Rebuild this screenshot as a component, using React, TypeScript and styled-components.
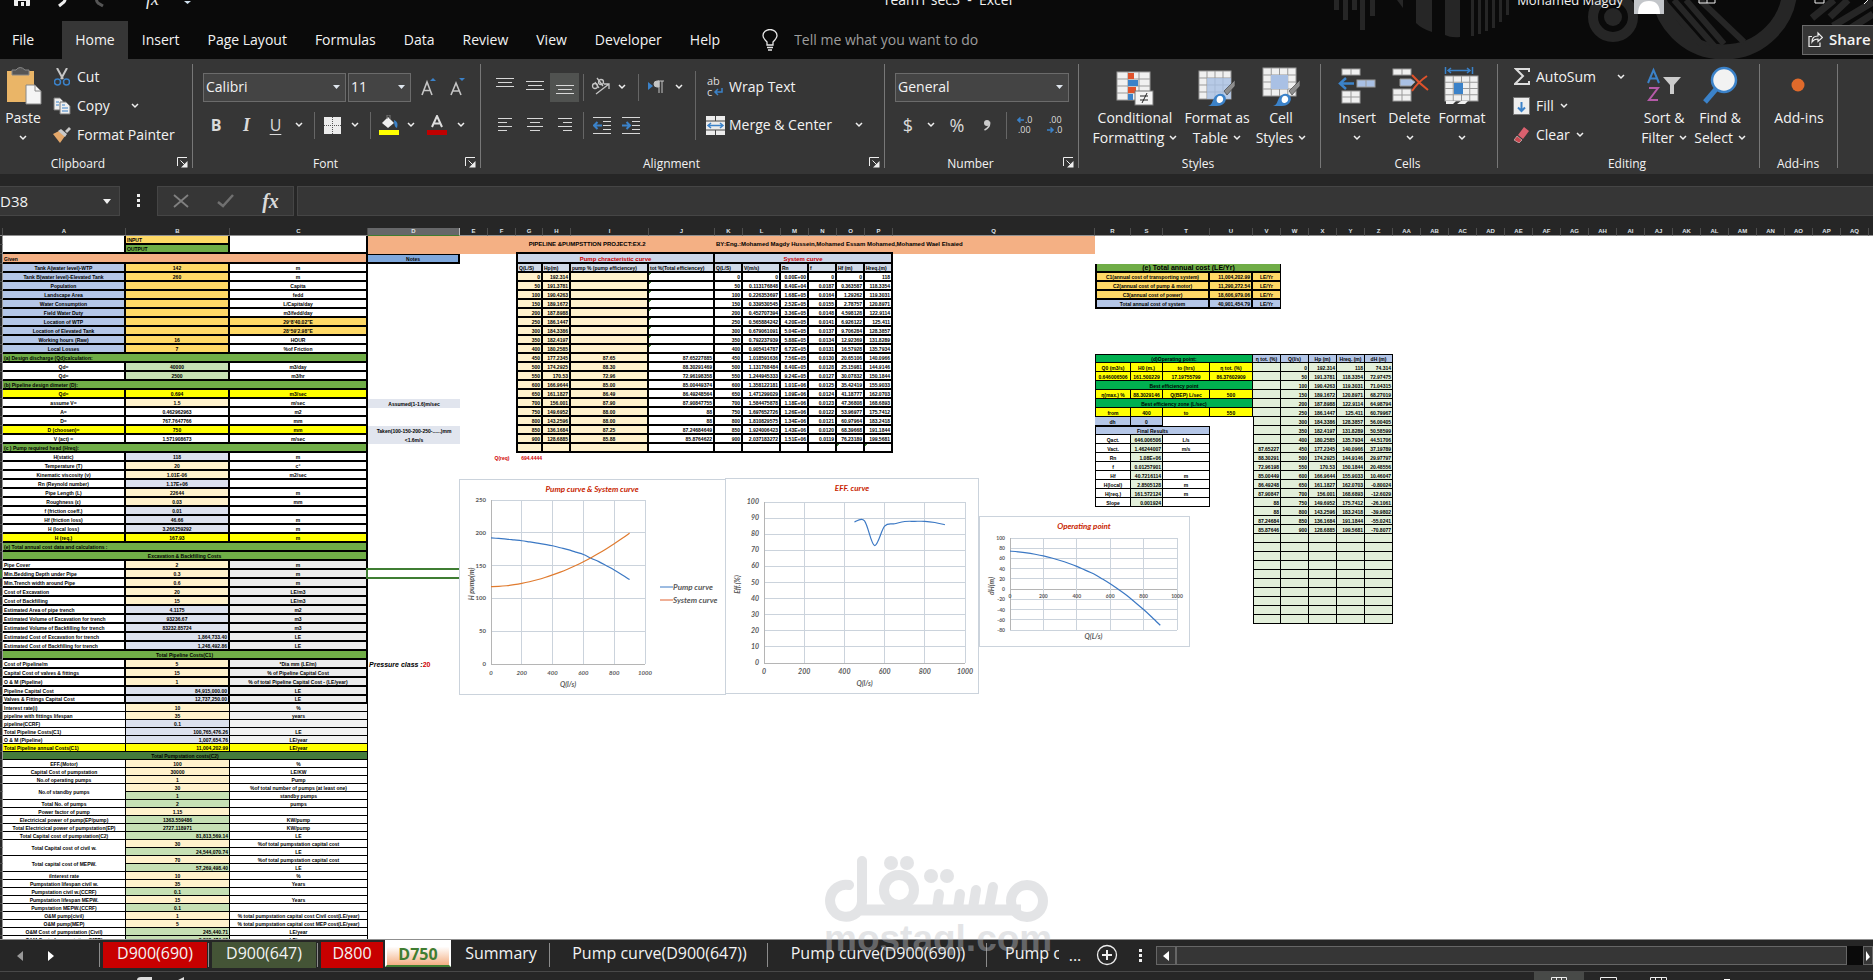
import React from 'react';
import styled, { createGlobalStyle, css } from 'styled-components';

const Global = createGlobalStyle`
  *, *::before, *::after { box-sizing: border-box; }
  body { margin: 0; background: #262626; overflow: hidden; }
  button, input, select { font: inherit; color: inherit; }
`;

const ui = `"Open Sans", "Noto Sans", sans-serif`;

const Window = styled.div`
  position: relative;
  height: 100vh;
  display: flex;
  flex-direction: column;
  overflow: hidden;
  font-family: ${ui};
  font-size: 14px;
  line-height: 20px;
  color: #f3f3f3;
`;

/* ---------- title bar and tabs ---------- */

const Top = styled.header`
  position: relative;
  background: #0a0a0a;
  flex: none;
`;
const Decor = styled.svg`
  position: absolute;
  right: 0;
  top: 0;
`;
const TitleBar = styled.div`
  position: relative;
  height: 21px;
  display: grid;
  grid-template-columns: 1fr auto 1fr;
  column-gap: 8px;
`;
const TitleItems = styled.div<{ $end?: boolean; $mid?: boolean }>`
  height: 32px;
  margin-top: -16px;
  padding-left: ${(p) => (p.$mid ? 22 : 0)}px;
  display: flex;
  align-items: center;
  white-space: nowrap;
  font-size: ${(p) => (p.$end ? 13 : 14)}px;
  justify-content: ${(p) => (p.$end ? 'flex-end' : 'flex-start')};
`;
const TabRow = styled.nav`
  position: relative;
  display: flex;
  height: 38px;
`;
const Tab = styled.button<{ $on?: boolean; $first?: boolean }>`
  border: 0;
  padding: 0 ${(p) => (p.$on ? 13 : 14)}px;
  margin-left: ${(p) => (p.$first ? '-2px' : 0)};
  margin-right: ${(p) => (p.$first ? '14px' : 0)};
  background: ${(p) => (p.$on ? '#363636' : 'transparent')};
  white-space: nowrap;
`;
const Tell = styled.label`
  display: flex;
  align-items: center;
  gap: 16px;
  padding: 0 0 0 28px;
  input {
    width: 240px;
    border: 0;
    padding: 0;
    background: transparent;
    outline: 0;
  }
  input::placeholder { color: #9d9d9d; opacity: 1; }
`;
const Share = styled.button`
  display: flex;
  align-items: center;
  gap: 6px;
  width: 76px;
  height: 30px;
  margin: 4px -5px 0 auto;
  padding: 0 0 2px 5px;
  background: #363636;
  border: 1px solid #6a6a6a;
  font-weight: 600;
  font-size: 15px;
  white-space: nowrap;
`;

/* ---------- ribbon ---------- */

const Ribbon = styled.section`
  display: flex;
  flex: none;
  height: 115px;
  background: #363636;
  overflow: hidden;
`;
const Group = styled.div<{ $w: number }>`
  position: relative;
  flex: none;
  width: ${(p) => p.$w}px;
  display: flex;
  flex-direction: column;
  justify-content: space-between;
  &::after {
    content: '';
    position: absolute;
    right: 0;
    top: 5px;
    bottom: 6px;
    width: 1px;
    background: #777;
  }
`;
const GroupBody = styled.div<{ $pad?: number }>`
  display: flex;
  padding-left: ${(p) => p.$pad ?? 0}px;
`;
const GroupLabel = styled.div<{ $pr?: number }>`
  height: 21px;
  display: flex;
  align-items: center;
  font-size: 12px;
  span { flex: 1; text-align: center; padding-right: ${(p) => p.$pr ?? 0}px; }
`;
const Launch = styled.button`
  width: 21px;
  height: 14px;
  padding: 0;
  border: 0;
  background: none;
  display: flex;
  justify-content: center;
`;
const TwoRows = styled.div`
  display: grid;
  grid-template-rows: 30px 30px;
  row-gap: 8px;
  padding-top: 13px;
`;
const ThreeRows = styled.div`
  display: grid;
  grid-template-rows: repeat(3, 29px);
  padding-top: 3px;
`;
const Row = styled.div<{ $pad?: number; $gap?: number }>`
  display: flex;
  align-items: center;
  gap: ${(p) => p.$gap ?? 0}px;
  padding-left: ${(p) => p.$pad ?? 0}px;
`;
const Btn = styled.button<{ $w: number; $on?: boolean }>`
  flex: none;
  width: ${(p) => p.$w}px;
  height: 29px;
  padding: 0;
  border: 0;
  background: ${(p) => (p.$on ? '#505250' : 'none')};
  display: flex;
  align-items: center;
  justify-content: center;
`;
const Glyph = styled.span<{ $size?: number; $serif?: boolean; $italic?: boolean; $u?: boolean; $bold?: boolean }>`
  font-size: ${(p) => p.$size ?? 16}px;
  font-family: ${(p) => (p.$serif ? '"Liberation Serif", serif' : ui)};
  font-style: ${(p) => (p.$italic ? 'italic' : 'normal')};
  font-weight: ${(p) => (p.$bold ? 700 : 400)};
  text-decoration: ${(p) => (p.$u ? 'underline' : 'none')};
  text-underline-offset: 3px;
  color: #dadada;
`;
const Sep = styled.i<{ $w: number; $tall?: boolean }>`
  flex: none;
  width: ${(p) => p.$w}px;
  height: ${(p) => (p.$tall ? 69 : 27)}px;
  margin-top: ${(p) => (p.$tall ? 12 : 0)}px;
  background: linear-gradient(#666, #666) center / 1px 100% no-repeat;
`;
const Pick = styled.div<{ $w: number }>`
  position: relative;
  width: ${(p) => p.$w}px;
  height: 29px;
  flex: none;
  select {
    appearance: none;
    width: 100%;
    height: 100%;
    padding: 0 2px;
    border: 1px solid #6b6b6b;
    border-radius: 0;
    background: #444;
    outline: 0;
  }
  svg { position: absolute; right: 6px; top: 12px; pointer-events: none; }
`;
const FontPicks = styled.div`
  display: flex;
  gap: 2px;
`;
const TextBtn = styled.button<{ $gap?: number; $pad?: number }>`
  display: flex;
  align-items: center;
  gap: ${(p) => p.$gap ?? 6}px;
  padding: 0 0 0 ${(p) => p.$pad ?? 0}px;
  border: 0;
  background: none;
  white-space: nowrap;
`;
const IconBox = styled.span<{ $w: number }>`
  width: ${(p) => p.$w}px;
  display: flex;
  justify-content: center;
`;
const Big = styled.button<{ $w: number }>`
  flex: none;
  width: ${(p) => p.$w}px;
  height: 90px;
  padding: 0;
  margin-top: 1px;
  border: 0;
  background: none;
  display: flex;
  flex-direction: column;
  align-items: center;
  white-space: nowrap;
  & > svg { flex: none; margin-top: 6px; margin-bottom: 2px; }
`;
const Line = styled.span`
  height: 20px;
  display: flex;
  align-items: center;
  gap: 5px;
`;

/* ---------- formula bar ---------- */

const FormulaBar = styled.section`
  flex: none;
  height: 54px;
  padding: 12px 0;
  display: flex;
  background: #262626;
`;
const field = css`
  height: 30px;
  background: #363636;
  border: 1px solid #454545;
`;
const NameBox = styled.div`
  ${field}
  border-left: 0;
  width: 120px;
  display: flex;
  align-items: center;
  input { width: 103px; border: 0; padding: 0; background: none; outline: 0; font-size: 15px; }
`;
const Dots = styled.div<{ $w: number }>`
  flex: none;
  width: ${(p) => p.$w}px;
  display: flex;
  align-items: center;
  justify-content: center;
`;
const FxBox = styled.div`
  ${field}
  width: 137px;
  display: flex;
  justify-content: space-around;
  align-items: center;
`;
const FormulaInput = styled.input`
  ${field}
  flex: 1;
  min-width: 0;
  margin-left: 3px;
  border-right: 0;
  outline: 0;
`;

/* ---------- sheet ---------- */

const Sheet = styled.main`
  position: relative;
  flex: 1;
  min-height: 0;
  overflow: hidden;
  background: #fff;
  border-bottom: 1px solid #8f8f8f;
`;
const Grid = styled.table`
  table-layout: fixed;
  border-collapse: separate;
  border-spacing: 0;
  font-family: "Liberation Sans", Arial, sans-serif;
  font-size: 5px;
  font-weight: 700;
  line-height: 6px;
  color: #000;
  td, th { padding: 0; overflow: hidden; white-space: nowrap; }
`;
const ColHead = styled.th<{ $on?: boolean }>`
  height: 8px;
  color: #dfe3e8;
  font-size: 6px;
  line-height: 7px;
  text-align: center;
  background: ${(p) => (p.$on ? '#666769' : '#262626')};
  border-right: 1px solid ${(p) => (p.$on ? '#bbb' : '#4d4d4d')};
  border-bottom: 1px solid ${(p) => (p.$on ? '#3f7d32' : '#8f8f8f')};
`;
const RowHead = styled.th<{ $on?: boolean }>`
  background: ${(p) => (p.$on ? '#3f7d32' : '#262626')};
  border-right: 1px solid #9a9a9a;
  border-bottom: 1px solid #4d4d4d;
`;
type CellStyle = {
  $bg?: string; $a?: string; $r?: number; $b?: number; $l?: number; $t?: number; $c?: string; $i?: boolean; $tri?: boolean;
};
const Cell = styled.td<CellStyle>`
  background: ${(p) => p.$bg ?? 'transparent'};
  text-align: ${(p) => p.$a ?? 'center'};
  color: ${(p) => p.$c ?? '#000'};
  font-style: ${(p) => (p.$i ? 'italic' : 'normal')};
  border: 0 solid #000;
  border-width: ${(p) => `${p.$t ?? 0}px ${p.$r ?? 0}px ${p.$b ?? 0}px ${p.$l ?? 0}px`};
  ${(p) => p.$tri && css`background-image: linear-gradient(135deg, #3f7d32 2px, transparent 2px);`}
`;
const Txt = styled.div<{ $low?: boolean; $size?: number }>`
  height: ${(p) => (p.$low ? 7 : 6)}px;
  padding: ${(p) => (p.$low ? '1px 1px 0' : '0 1px')};
  overflow: hidden;
  font-size: ${(p) => p.$size ?? 5}px;
`;
const Red = styled.span`color: #d00000; font-style: normal;`;
const Selection = styled.div`
  position: absolute;
  left: 366px;
  top: 340px;
  width: 95px;
  height: 11px;
  border: 2px solid #3f7d32;
`;
const Floating = styled.figure<{ $x: number; $y: number; $w: number; $h: number }>`
  position: absolute;
  left: ${(p) => p.$x}px;
  top: ${(p) => p.$y}px;
  width: ${(p) => p.$w}px;
  height: ${(p) => p.$h}px;
  margin: 0;
  background: #fff;
  border: 1px solid #cbd3dc;
  svg { display: block; }
`;

/* ---------- sheet tabs and status bar ---------- */

const Bottom = styled.footer`
  flex: none;
  height: 31px;
  display: flex;
  background: #262626;
  font-size: 16px;
  line-height: 22px;
  white-space: nowrap;
  overflow: hidden;
`;
const NavArrows = styled.div`
  flex: none;
  width: 99px;
  display: flex;
  align-items: center;
  padding-left: 4px;
`;
const SheetTab = styled.button<{ $w: number; $bg?: string; $on?: boolean; $clip?: boolean }>`
  flex: none;
  width: ${(p) => p.$w}px;
  height: ${(p) => (p.$on ? 27 : 26)}px;
  margin: ${(p) => (p.$on ? '0 0 0 1px' : '2px 1px 0 3px')};
  padding: 0 0 4px;
  border: 0;
  overflow: hidden;
  background: ${(p) => p.$bg ?? 'none'};
  ${(p) => p.$clip && css`text-align: left; padding-left: 15px;`}
  ${(p) => p.$on && css`
    color: #3f7d32;
    font-weight: 700;
    background: linear-gradient(#fff 20%, #f4b084 100%);
    border: 2px solid #fff;
    border-bottom: 2px solid #3f7d32;
    padding: 0;
  `}
`;
const TabSep = styled.i`
  flex: none;
  width: 1px;
  height: 24px;
  margin-top: 3px;
  background: #8b8b8b;
`;
const ScrollBar = styled.div`
  flex: 1;
  display: flex;
  height: 19px;
  margin: 6px 0 0;
  background: #0a0a0a;
`;
const ScrollBtn = styled.button<{ $w: number }>`
  flex: none;
  width: ${(p) => p.$w}px;
  padding: 0;
  background: #363636;
  border: 1px solid #666;
  display: flex;
  align-items: center;
  justify-content: center;
`;
const Thumb = styled.div`
  flex: 1;
  margin-right: 16px;
  background: #363636;
  border: 1px solid #666;
`;
const Status = styled.div`
  flex: none;
  height: 9px;
  background: #262626;
  border-top: 1px solid #484848;
  display: flex;
  justify-content: space-between;
  overflow: hidden;
  svg { flex: none; }
`;
const Watermark = styled.svg`
  position: absolute;
  left: 44vw;
  bottom: 25px;
  pointer-events: none;
  opacity: 0.41;
`;

/* ---------- small icons ---------- */

const Chev = ({ w = 8 }: { w?: number }) => (
  <svg width={w} height="6" viewBox="0 0 8 6" fill="none" stroke="#f0f0f0" strokeWidth="1.5"><path d="M1 1l3 3 3-3" /></svg>
);
const Caret = () => <svg width="7" height="4"><path d="M0 0h7L3.5 4z" fill="#dfe6ee" /></svg>;
const ChevBtn = ({ w, label }: { w: number; label: string }) => <Btn $w={w} aria-label={label}><Chev /></Btn>;
const LaunchIcon = ({ label }: { label: string }) => (
  <Launch aria-label={label}>
    <svg width="11" height="11" fill="none" stroke="#eee"><path d="M.5 9V.5H10M3.500 3.500L9 9" /><path d="M10.500 4v6.500H4z" fill="#eee" stroke="none" /></svg>
  </Launch>
);
const Lines = ({ rows, w = 18, top = 0 }: { rows: number[][]; w?: number; top?: number }) => (
  <svg width={w} height="18" stroke="#d8d8d8">
    {rows.map(([x, l], i) => <path key={i} d={`M${x} ${top + i * 4 + 0.5}h${l}`} />)}
  </svg>
);
const Indent = ({ dir }: { dir: number }) => (
  <svg width="18" height="17" fill="none" stroke="#d8d8d8">
    <path d="M0 .5h18M10 4.500h8M10 8.500h8M10 12.500h8M0 16.500h18" />
    <path d={dir < 0 ? 'M9 8.500H1M4.500 5L1 8.500 4.500 12' : 'M0 8.500h8M4.500 5L8 8.500 4.500 12'} stroke="#3b82c9" strokeWidth="2" />
  </svg>
);
const Sheetlet = ({ x, y, w, h, nx, ny }: { x: number; y: number; w: number; h: number; nx: number; ny: number }) => (
  <g stroke="#999" fill="#f0f0f0">
    <rect x={x} y={y} width={w} height={h} />
    {Array.from({ length: nx - 1 }, (_, i) => <path key={'x' + i} d={`M${x + ((i + 1) * w) / nx} ${y}v${h}`} />)}
    {Array.from({ length: ny - 1 }, (_, i) => <path key={'y' + i} d={`M${x} ${y + ((i + 1) * h) / ny}h${w}`} />)}
  </g>
);
const Brush = () => (
  <g>
    <path d="M37 11L26 22l3 4 8-9z" fill="#8d8d8d" stroke="#333" strokeWidth=".6" />
    <path d="M10 37c4-1 4-4 6-8 2-4 8-6 11-2 3 5-2 10-8 10z" fill="#3b82c9" />
    <path d="M19 29c1-3 5-3 6 0s-2 5-4 5-3-3-2-5z" fill="#fff" />
  </g>
);

/* ---------- sheet data ---------- */

const colNames = [...'ABCDEFGHIJKLMNOPQRSTUVWXYZ'.split(''), ...'ABCDEFGHIJKLMNOPQRSTUVWXYZ'.split('').map((c) => 'A' + c)];
const firstWidths = [123, 104, 138, 92, 28, 28, 27, 28, 78, 66, 28, 38, 28, 28, 28, 28, 202, 36, 32, 47, 43, 28, 28, 28, 28, 28];
const colWidths = colNames.map((_, i) => firstWidths[i] ?? 28);
const tableWidth = colWidths.reduce((a, b) => a + b, 3);
const rowHeight = (r: number) => (r <= 51 ? 9 : 8);

type C = { v?: React.ReactNode; cs?: number; rs?: number; size?: number } & CellStyle;
const cells: Record<string, C> = {};
const key = (c: number, r: number) => `${c}:${r}`;
const put = (col: string, r: number, v: React.ReactNode, o: C = {}) => {
  cells[key(colNames.indexOf(col), r)] = { v, ...o };
};

const IN = '#ffd966', GREEN = '#70ad47', SAL = '#f4b084', BLUE = '#b4c6e7', LG = '#c6e0b4', CREAM = '#fff2cc';
const PALE = '#dce1ee', YEL = '#ffff00', GRAY = '#ededed', G0 = '#00b050', EG = '#e2efda';
const T: C = { $r: 2, $b: 2 };
const N: C = { $r: 1, $b: 1 };

put('A', 1, '', { rs: 2, ...T });
put('B', 1, 'INPUT', { ...T, $bg: IN, $a: 'left' });
put('B', 2, 'OUTPUT', { ...T, $bg: GREEN, $a: 'left' });
put('C', 1, '', { rs: 2, ...T });
put('A', 3, 'Given', { ...T, cs: 3, $bg: SAL, $a: 'left' });
put('D', 1, '', { cs: 3, rs: 2, $bg: SAL });
put('G', 1, 'PIPELINE &PUMPSTTION PROJECT:EX.2', { cs: 4, rs: 2, $bg: SAL, $b: 2, $a: 'left', size: 6 });
put('K', 1, 'BY:Eng.:Mohamed Magdy Hussein,Mohamed Essam Mohamed,Mohamed Wael Elsaied', { cs: 6, rs: 2, $bg: SAL, $a: 'left', $b: 2, size: 6 });
put('Q', 1, '', { rs: 2, $bg: SAL });
put('D', 3, 'Notes', { ...T, $t: 1, $bg: '#7fa8dc' });

type L = [string, string, string, string?, string?, string?];
const left: Record<number, L> = {
  4: ['Tank A(water level)-WTP', '142', 'm', BLUE, IN],
  5: ['Tank B(water level)-Elevated Tank', '260', 'm', BLUE, IN],
  6: ['Population', '', 'Capita', BLUE, IN],
  7: ['Landscape Area', '', 'fedd', BLUE, IN],
  8: ['Water Consumption', '', 'L/Capita/day', BLUE, IN],
  9: ['Field Water Duty', '', 'm3/fedd/day', BLUE, IN],
  10: ['Location of WTP', '', '29°8\'40.02"E', BLUE, IN, IN],
  11: ['Location of Elevated Tank', '', '28°59\'2.98"E', BLUE, IN, IN],
  12: ['Working hours (Raw)', '16', 'HOUR', BLUE, IN],
  13: ['Local Losses', '7', '%of Friction', BLUE, IN],
  15: ['Qd=', '40000', 'm3/day', '#fff', LG],
  16: ['Qd=', '2500', 'm3/hr', '#fff', LG],
  18: ['Qd=', '0.694', 'm3/sec', YEL, YEL, YEL],
  19: ['assume V=', '1.5', 'm/sec', '#fff', CREAM],
  20: ['A=', '0.462962963', 'm2'],
  21: ['D=', '767.7647766', 'mm'],
  22: ['D (choosen)=', '750', 'mm', YEL, YEL, YEL],
  23: ['V (act) =', '1.571908673', 'm/sec'],
  25: ['H(static)', '118', 'm', '#fff', PALE],
  26: ['Temperature (T)', '20', 'c°', '#fff', CREAM],
  27: ['Kinematic viscosity (ν)', '1.01E-06', 'm2/sec', '#fff', CREAM],
  28: ['Rn (Reynold number)', '1.17E+06', '', '#fff', PALE],
  29: ['Pipe Length (L)', '22644', 'm', '#fff', CREAM],
  30: ['Roughness (ε)', '0.03', 'mm', '#fff', CREAM],
  31: ['f (friction coeff.)', '0.01', '', '#fff', PALE],
  32: ['Hf (friction loss)', '46.66', 'm', '#fff', PALE],
  33: ['H (local loss)', '3.266259292', 'm', '#fff', PALE],
  34: ['H (req.)', '167.93', 'm', YEL, YEL, YEL],
  37: ['Pipe Cover', '2', 'm', '#fff', CREAM, GRAY],
  38: ['Min.Bedding Depth under Pipe', '0.3', 'm', '#fff', CREAM, GRAY],
  39: ['Min.Trench width around Pipe', '0.6', 'm', '#fff', CREAM, GRAY],
  40: ['Cost of Excavation', '20', 'LE/m3', '#fff', CREAM, GRAY],
  41: ['Cost of Backfilling', '15', 'LE/m3', '#fff', CREAM, GRAY],
  42: ['Estimated Area of pipe trench', '4.1175', 'm2', '#fff', PALE, GRAY],
  43: ['Estimated Volume of Excavation for trench', '93236.67', 'm3', '#fff', PALE, GRAY],
  44: ['Estimated Volume of Backfilling for trench', '83232.85724', 'm3', '#fff', PALE, GRAY],
  45: ['Estimated Cost of Excavation for trench', '1,864,733.40', 'LE', '#fff', PALE, GRAY],
  46: ['Estimated Cost of Backfilling for trench', '1,248,492.86', 'LE', '#fff', PALE, GRAY],
  48: ['Cost of Pipeline/m', '5', '*Dia mm (LE/m)', '#fff', CREAM, GRAY],
  49: ['Capital Cost of valves & fittings', '15', '% of Pipeline Capital Cost', '#fff', CREAM, GRAY],
  50: ['O & M (Pipeline)', '1', '% of total Pipeline Capital Cost - (LE/year)', '#fff', CREAM, GRAY],
  51: ['Pipeline Capital Cost', '84,915,000.00', 'LE', '#fff', PALE, GRAY],
  52: ['Valves & Fittings Capital Cost', '12,737,250.00', 'LE', '#fff', PALE, GRAY],
  53: ['Interest rate(i)', '10', '%', '#fff', CREAM, '#f2f2f2'],
  54: ['pipeline with fittings lifespan', '35', 'years', '#fff', CREAM, '#f2f2f2'],
  55: ['pipeline(CCRF)', '0.1', '', '#fff', PALE, '#f2f2f2'],
  56: ['Total Pipeline Costs(C1)', '100,765,476.26', 'LE', '#fff', PALE, '#f2f2f2'],
  57: ['O & M (Pipeline)', '1,007,654.76', 'LE/year', '#fff', PALE, '#f2f2f2'],
  58: ['Total Pipeline annual Costs(C1)', '11,004,202.99', 'LE/year', YEL, YEL, YEL],
  60: ['EFF.(Motor)', '100', '%', '#fff', CREAM],
  61: ['Capital Cost of pumpstation', '30000', 'LE/KW', '#fff', CREAM],
  62: ['No.of operating pumps', '1', 'Pump', '#fff', CREAM],
  63: ['No.of standby pumps', '30', '%of total number of pumps (at least one)', '#fff', CREAM],
  64: ['', '1', 'standby pumps', '#fff', LG],
  65: ['Total No. of pumps', '2', 'pumps', '#fff', LG],
  66: ['Power factor of pump', '1.15', '', '#fff', CREAM],
  67: ['Electricical power of pump(EP/pump)', '1363.559486', 'KW/pump', '#fff', LG],
  68: ['Total Electricical power of pumpstation(EP)', '2727.118971', 'KW/pump', '#fff', LG],
  69: ['Total Capital cost of pumpstation(C2)', '81,813,569.14', 'LE', '#fff', LG],
  70: ['Total Capital cost of civil w.', '30', '%of total pumpstation capital cost', '#fff', CREAM],
  71: ['', '24,544,070.74', 'LE', '#fff', LG],
  72: ['Total capital cost of MEPW.', '70', '%of total pumpstation capital cost', '#fff', CREAM],
  73: ['', '57,269,498.40', 'LE', '#fff', LG],
  74: ['iInterest rate', '10', '%', '#fff', CREAM],
  75: ['Pumpstation lifespan civil w.', '35', 'Years', '#fff', CREAM],
  76: ['Pumpstation civil w.(CCRF)', '0.1', '', '#fff', LG],
  77: ['Pumpstation lifespan MEPW.', '15', 'Years', '#fff', CREAM],
  78: ['Pumpstation MEPW.(CCRF)', '0.1', '', '#fff', LG],
  79: ['O&M pump(civil)', '1', '% total pumpstation capital cost Civil cost(LE/year)', '#fff', CREAM],
  80: ['O&M pump(MEP)', '5', '% total pumpstation capital cost MEP cost(LE/year)', '#fff', CREAM],
  81: ['O&M Cost of pumpstation (Civil)', '245,440.71', 'LE/year', '#fff', LG],
  82: ['O&M Cost of pumpstation (MEP)', '2,863,474.92', 'LE/year', '#fff', LG],
};
Object.entries(left).forEach(([k, [a, b, c, ba, bb, bc]]) => {
  const r = +k;
  const base = r <= 52 ? T : N;
  const span = [63, 70, 72].includes(r);
  if (![64, 71, 73].includes(r)) put('A', r, a, { ...base, $bg: ba ?? '#fff', $a: r >= 37 && r <= 58 ? 'left' : 'center', rs: span ? 2 : 1 });
  put('B', r, b, { ...base, $bg: bb ?? '#fff', $a: b.includes(',') ? 'right' : 'center' });
  put('C', r, c, { ...base, $bg: bc ?? '#fff' });
});
([[14, '(a) Design discharge (Qd)calculation:'], [17, '(b) Pipeline design dimeter (D):'], [24, '(c ) Pump required head (Hreq):'], [35, '(e) Total annual cost data and calculations :']] as [number, string][])
  .forEach(([r, t]) => put('A', r, t, { ...T, cs: 3, $bg: GREEN, $a: 'left' }));
put('A', 36, 'Excavation & Backfilling Costs', { ...T, cs: 3, $bg: GREEN });
put('A', 47, 'Total Pipeline Costs(C1)', { ...T, cs: 3, $bg: GREEN });
put('A', 59, 'Total Pumpstation costs(C2)', { ...N, cs: 3, $bg: '#457c3c' });
put('D', 19, 'Assumed(1-1.6)m/sec', { $bg: '#e1e5ee' });
put('D', 22, 'Taken(100-150-200-250-......)mm', { $bg: '#e1e5ee' });
put('D', 23, '<1.6m/s', { $bg: '#e1e5ee' });
put('D', 48, <>Pressure class :<Red>20</Red></>, { $a: 'left', $i: true, size: 7 });

/* pump and system curve table */
put('G', 3, 'Pump chracteristic curve', { ...T, cs: 4, $l: 2, $bg: '#ccd6e8', $c: '#d00000', size: 6 });
put('K', 3, 'System curve', { ...T, cs: 6, $bg: '#ccd6e8', $c: '#d00000', size: 6 });
const pumpCols = ['G', 'H', 'I', 'J', 'K', 'L', 'M', 'N', 'O', 'P'];
['Q(L/S)', 'Hp(m)', 'pump % (pump efficiencey)', 'tot %(Total efficiencey)', 'Q(L/S)', 'V(m/s)', 'Rn', 'f', 'Hf (m)', 'Hreq.(m)']
  .forEach((t, i) => put(pumpCols[i], 4, t, { ...T, $l: i ? 0 : 2, $bg: '#d0dae8', $a: 'left' }));
const hp = ['192.314', '191.3781', '190.4263', '189.1672', '187.8988', '186.1447', '184.3386', '182.4197', '180.2585', '177.2345', '174.2925', '170.53', '166.9644', '161.1827', '156.001', '149.6952', '143.2596', '136.1684', '128.6885'];
const eff = ['', '', '', '', '', '', '', '', '', '87.65', '88.30', '72.96', '85.00', '86.49', '87.90', '88.00', '88.00', '87.25', '85.88'];
const effT = ['', '', '', '', '', '', '', '', '', '87.65227885', '88.30291469', '72.96198358', '85.00449374', '86.49248564', '87.90847755', '88', '88', '87.24684649', '85.8764622'];
const vel = ['0', '0.113176848', '0.226353697', '0.339530545', '0.452707394', '0.565884242', '0.679061091', '0.792237939', '0.905414787', '1.018591636', '1.131768484', '1.244945333', '1.358122181', '1.471299029', '1.584475878', '1.697652726', '1.810829575', '1.924006423', '2.037183272'];
const rn = ['0.00E+00', '8.40E+04', '1.68E+05', '2.52E+05', '3.36E+05', '4.20E+05', '5.04E+05', '5.88E+05', '6.72E+05', '7.56E+05', '8.40E+05', '9.24E+05', '1.01E+06', '1.09E+06', '1.18E+06', '1.26E+06', '1.34E+06', '1.43E+06', '1.51E+06'];
const ff = ['0', '0.0187', '0.0164', '0.0155', '0.0148', '0.0141', '0.0137', '0.0134', '0.0131', '0.0130', '0.0128', '0.0127', '0.0125', '0.0124', '0.0123', '0.0122', '0.0121', '0.0120', '0.0119'];
const hf = ['0', '0.363587', '1.29262', '2.78757', '4.598128', '6.926122', '9.706284', '12.92369', '16.57928', '20.65106', '25.15981', '30.07832', '35.42419', '41.18777', '47.36808', '53.96977', '60.97964', '68.39668', '76.23189'];
const hreq = ['118', '118.3354', '119.3031', '120.8971', '122.9114', '125.411', '128.3857', '131.8289', '135.7934', '140.0966', '144.9146', '150.1844', '155.9033', '162.0703', '168.6893', '175.7412', '183.2418', '191.1844', '199.5681'];
const dh = ['74.314', '72.97475', '71.04315', '68.27019', '64.98794', '60.79967', '56.00405', '50.58599', '44.51706', '37.19789', '29.97797', '20.48556', '10.46047', '-0.80024', '-12.6029', '-26.1061', '-39.9802', '-55.0241', '-70.8077'];
hp.forEach((_, i) => {
  const r = 5 + i, q = String(i * 50);
  const row = [q, hp[i], eff[i], effT[i], q, vel[i], rn[i], ff[i], hf[i], hreq[i]];
  row.forEach((t, j) => put(pumpCols[j], r, t, { ...T, $l: j ? 0 : 2, $bg: j < 3 ? CREAM : '#fff', $a: j === 2 ? 'center' : 'right', $tri: j === 3 && i < 9 }));
  const res = [effT[i].slice(0, 8), q, hp[i], hreq[i], dh[i]];
  res.forEach((t, j) => put('VWXYZ'[j], 15 + i, t, { ...N, $l: !j && i > 5 ? 1 : 0, $bg: EG, $a: 'right' }));
});
pumpCols.forEach((c, j) => put(c, 24, '', { ...T, $l: j ? 0 : 2, $bg: j < 3 ? CREAM : '#fff', $tri: j > 7 }));
put('F', 25, 'Q(req)', { $c: '#d00000' });
put('G', 25, '694.4444', { $c: '#d00000', $a: 'right' });
for (let r = 34; r <= 43; r++) 'VWXYZ'.split('').forEach((c) => put(c, r, '', { ...N, $l: c === 'V' ? 1 : 0, $bg: EG }));

/* annual cost summary */
put('R', 4, '(e) Total annual cost (LE/Yr)', { cs: 5, $b: 2, $l: 2, $r: 1, $bg: GREEN, size: 7 });
([['C1(annual cost of transporting system)', '11,004,202.99', IN], ['C2(annual cost of pump & motor)', '11,290,272.54', IN], ['C3(annual cost of power)', '18,606,979.06', IN], ['Total annual cost of system', '40,901,454.79', BLUE]] as string[][])
  .forEach(([a, b, bg], i) => {
    put('R', 5 + i, a, { ...T, cs: 3, $l: 2, $bg: bg });
    put('U', 5 + i, b, { ...T, $bg: bg, $a: 'right' });
    put('V', 5 + i, 'LE/Yr', { ...N, $b: 2, $bg: bg });
  });

/* operating point */
put('R', 14, '(d)Operating point:', { ...N, cs: 4, $t: 1, $l: 1, $bg: G0 });
['η tot. (%)', 'Q(l/s)', 'Hp (m)', 'Hreq. (m)', 'dH (m)'].forEach((t, i) => put('VWXYZ'[i], 14, t, { ...N, $t: 1, $bg: BLUE }));
const quad = (r: number, v: string[]) => v.forEach((t, i) => put('RSTU'[i], r, t, { ...N, $l: i ? 0 : 1, $bg: YEL }));
quad(15, ['Q0 (m3/s)', 'H0 (m.)', 'to (hrs)', 'η tot. (%)']);
quad(16, ['0.646006506', '161.500229', '17.19755799', '86.37602909']);
put('R', 17, 'Best efficiency point', { ...N, cs: 4, $l: 1, $bg: G0 });
quad(18, ['η(max.) %', '88.3029146', 'Q(BEP) L/sec', '500']);
put('R', 19, 'Best efficiency zone (L/sec)', { ...N, cs: 4, $l: 1, $bg: G0 });
quad(20, ['from', '400', 'to', '550']);
put('R', 21, 'dh', { ...N, $bg: BLUE });
put('S', 21, '0', { ...N, $bg: BLUE });
put('R', 22, 'Final Results', { ...N, cs: 3, $l: 1, $t: 1, $bg: BLUE });
([['Qact.', '646.006506', 'L/s'], ['Vact.', '1.46244007', 'm/s'], ['Rn', '1.08E+06', ''], ['f', '0.01257901', ''], ['Hf', '40.7216114', 'm'], ['H(local)', '2.8505128', 'm'], ['H(req.)', '161.572124', 'm'], ['Slope', '0.001924', '']] as string[][])
  .forEach(([a, b, c], i) => {
    put('R', 23 + i, a, { ...N, $l: 1 });
    put('S', 23 + i, b, { ...N, $bg: EG, $a: 'right' });
    put('T', 23 + i, c, { ...N });
  });

const covered = new Set<string>();
Object.entries(cells).forEach(([k, c]) => {
  const [x, y] = k.split(':').map(Number);
  for (let dy = 0; dy < (c.rs ?? 1); dy++) for (let dx = 0; dx < (c.cs ?? 1); dx++) if (dx || dy) covered.add(key(x + dx, y + dy));
});

/* Long text in the title row runs on over the empty cell beside it. */
const Spill = styled.div`
  position: relative;
  width: 0;
  padding-left: 1px;
  line-height: 7px;
  font-size: 6px;
`;
const SpillCell = styled(Cell)`
  && { overflow: visible; }
`;

const renderRow = (r: number) => {
  const out: React.ReactNode[] = [];
  let x = 0;
  while (x < colNames.length) {
    const k = key(x, r);
    if (covered.has(k)) { x++; continue; }
    const c = cells[k];
    if (c) {
      const { v, cs = 1, rs = 1, size, ...st } = c;
      out.push(
        r === 1 && colNames[x] === 'K' ? (
          <SpillCell key={k} colSpan={cs} rowSpan={rs} {...st}><Spill>{v}</Spill></SpillCell>
        ) : (
          <Cell key={k} colSpan={cs} rowSpan={rs} {...st}>
            {v ? <Txt $low={r <= 51 && rs === 1} $size={size}>{r === 1 && colNames[x] === 'G' ? <>&nbsp;&nbsp;&nbsp;&nbsp;&nbsp;&nbsp;&nbsp;{v}</> : v}</Txt> : null}
          </Cell>
        ),
      );
      x++;
    } else {
      let n = 1;
      while (x + n < colNames.length && !cells[key(x + n, r)] && !covered.has(key(x + n, r))) n++;
      out.push(<td key={k} colSpan={n} />);
      x += n;
    }
  }
  return out;
};

/* ---------- charts ---------- */

const qs = hp.map((_, i) => i * 50);
const smooth = (pts: number[][]) =>
  pts.map((p, i) => {
    if (!i) return `M${p[0]} ${p[1]}`;
    const a = pts[i - 2] ?? pts[i - 1], b = pts[i - 1], d = pts[i + 1] ?? p;
    return `C${b[0] + (p[0] - a[0]) / 6} ${b[1] + (p[1] - a[1]) / 6} ${p[0] - (d[0] - b[0]) / 6} ${p[1] - (d[1] - b[1]) / 6} ${p[0]} ${p[1]}`;
  }).join('');

type ChartProps = {
  x: number; y: number; w: number; h: number; title: string; tx: number;
  plot: [number, number, number, number]; min: number; max: number; step: number;
  yl: string; xl: string; fs: number; axisY?: number; series: { d: number[][]; c: string }[]; legend?: [string, string][];
};
const Chart = ({ x, y, w, h, title, tx, plot: [px, py, pw, ph], min, max, step, yl, xl, fs, axisY, series, legend }: ChartProps) => {
  const X = (v: number) => px + (v / 1000) * pw;
  const Y = (v: number) => py + ph - ((v - min) / (max - min)) * ph;
  const ticks: number[] = [];
  for (let v = min; v <= max; v += step) ticks.push(v);
  const xt = [0, 200, 400, 600, 800, 1000];
  const labelY = axisY === undefined ? py + ph + 11 : Y(axisY) + 9;
  return (
    <Floating $x={x} $y={y} $w={w} $h={h}>
      <svg width={w - 2} height={h - 2} fontFamily="Lato, sans-serif" fontWeight="700" fontSize={fs} fill="#595959">
        <g stroke="#cbd3dc" shapeRendering="crispEdges">
          {ticks.map((v) => <path key={v} d={`M${px} ${Y(v)}h${pw}`} stroke={v === (axisY ?? min) ? '#b5b5b5' : undefined} />)}
          {xt.map((v) => <path key={v} d={`M${X(v)} ${py}v${ph}`} stroke={v ? undefined : '#b5b5b5'} />)}
        </g>
        <text x={tx} y="12" textAnchor="middle" fontSize="8" fontStyle="italic" fill="#c81e00">{title}</text>
        {ticks.map((v) => <text key={v} x={px - 5} y={Y(v) + 2} textAnchor="end" fontStyle={fs > 6 ? 'italic' : undefined}>{v}</text>)}
        {xt.map((v) => <text key={v} x={X(v)} y={labelY} textAnchor="middle" fontStyle={fs > 5 ? 'italic' : undefined}>{v}</text>)}
        <text x={px + pw / 2} y={h - 9} textAnchor="middle" fontSize="7" fontStyle="italic">{xl}</text>
        <text transform={`translate(14 ${py + ph / 2 + 2}) rotate(-90)`} textAnchor="middle" fontSize="7" fontStyle="italic">{yl}</text>
        {series.map((s, i) => <path key={i} d={smooth(s.d.map(([a, b]) => [X(a), Y(b)]))} fill="none" stroke={s.c} strokeWidth="1.2" />)}
        {legend?.map(([t, c], i) => (
          <g key={t}>
            <path d={`M200 ${107 + i * 13}h13`} stroke={c} />
            <text x="213" y={110 + i * 13} fontSize="8" fontStyle="italic">{t}</text>
          </g>
        ))}
      </svg>
    </Floating>
  );
};

const tabNames = ['Home', 'Insert', 'Page Layout', 'Formulas', 'Data', 'Review', 'View', 'Developer', 'Help'];

export default function App() {
  return (
    <Window>
      <Global />
      <Top>
        <Decor width="540" height="59" viewBox="1333 0 540 59" fill="#262626">
          <path d="M1334 0h5v10h-5zM1343 0h5v20h-5zM1352 0h5v10h-5zM1360 0h5v30h-5zM1370 0h5v16h-5zM1397 0h6v8zM1416 0h16v32q-10-3-16-9zM1445 0h15v37q-9 1-15-2zM1471 0h3v36h-3zM1478 0h3v34h-3zM1485 0h3v31h-3zM1492 0h3v28h-3zM1499 0h3v22h-3zM1506 0h3v15h-3z" />
          <circle cx="1613" cy="17" r="20" fill="none" stroke="#262626" strokeWidth="10" />
          <circle cx="1613" cy="17" r="9" />
          <circle cx="1724" cy="-14" r="66" fill="none" stroke="#262626" strokeWidth="15" />
          <path d="M1662 0l46 52M1674 0l42 48M1686 0l38 44M1700 0l44 42" stroke="#262626" strokeWidth="6" />
          <path d="M1834 0l-22 18M1848 0l-18 17M1873 2l-40 24M1873 14l-22 14" stroke="#262626" strokeWidth="7" />
        </Decor>
        <TitleBar>
          <TitleItems>
            <svg width="200" height="32" fill="none" stroke="#eee">
              <path d="M14.500 8v13.500h15V8" fill="#eee" /><path d="M18 17h8v5h-8z" fill="#0a0a0a" stroke="none" /><path d="M21 18h3v4h-3z" fill="#eee" stroke="none" />
              <path d="M58 10q10 2 6 8l-5 4" strokeWidth="3" /><path d="M101 10q-7 5-3 9l5 3" stroke="#555" strokeWidth="3" />
              <path d="M184 17h7l-3.500 3z" fill="#cfe0ee" stroke="none" />
              <text x="146" y="21" fontFamily="Liberation Serif, serif" fontStyle="italic" fontSize="18" fill="#eee" stroke="none">fx</text>
            </svg>
          </TitleItems>
          <TitleItems $mid>Team1 sec3&nbsp; -&nbsp; Excel</TitleItems>
          <TitleItems $end>
            Mohamed Magdy
            <svg width="250" height="32" fill="none" stroke="#eee">
              <path d="M11 0h30v30H11z" fill="#c3c6ca" stroke="none" /><path d="M15 30q0-13 11-13t11 13z" fill="#fff" stroke="none" />
              <path d="M76 10h16v9H76zM84 10v9M192 10h9v9h-9z" /><path d="M241 20l6-6" />
            </svg>
          </TitleItems>
        </TitleBar>
        <TabRow>
          <Tab $first>File</Tab>
          {tabNames.map((t) => <Tab key={t} $on={t === 'Home'}>{t}</Tab>)}
          <Tell>
            <svg width="16" height="22" fill="none" stroke="#e8e8e8" strokeWidth="1.300"><path d="M5 16v-3Q1 9 1 6.500a7 6 0 0 1 14 0Q15 9 11 13v3zM5 18.500h6M6 21h4" /></svg>
            <input aria-label="Tell me what you want to do" placeholder="Tell me what you want to do" />
          </Tell>
          <Share>
            <svg width="15" height="16" fill="none" stroke="#eee" strokeWidth="1.200"><path d="M4 5.500H1v10h11v-4M4 11q0-6 6-6V2l4.500 4.500L10 10.500V8Q6 8 4 11z" /></svg>
            Share
          </Share>
        </TabRow>
      </Top>

      <Ribbon>
        <Group $w={193}>
          <GroupBody>
            <Big $w={46}>
              <svg width="38" height="40" viewBox="-2 0 38 40"><rect x="1" y="5" width="27" height="31" fill="#eab567" /><path d="M6 9V4h4q4-5 9 0h4v5z" fill="#555" stroke="#888" /><path d="M20 19h9l6 6v13H20z" fill="#f5f5f5" stroke="#888" /><path d="M29 19v6h6" fill="none" stroke="#888" /></svg>
              <Line>Paste</Line><Line><Chev /></Line>
            </Big>
            <ThreeRows>
              <TextBtn $pad={7}><IconBox $w={18}><svg width="16" height="18" fill="none"><path d="M3 0l6 11M13 0L7 11" stroke="#c5c5c5" strokeWidth="2" /><circle cx="3.500" cy="14" r="3" stroke="#3b82c9" strokeWidth="1.500" /><circle cx="12.500" cy="14" r="3" stroke="#3b82c9" strokeWidth="1.500" /></svg></IconBox>Cut</TextBtn>
              <Row>
                <TextBtn $pad={7}><IconBox $w={18}><svg width="18" height="18" fill="#eee" stroke="#777"><path d="M1 1h6l3 3v9H1z" /><path d="M7 5h6l4 4v8H7z" /><path d="M3 5h3M3 8h3M9 11h6M9 14h6M9 8h3" stroke="#3b82c9" /></svg></IconBox>Copy</TextBtn>
                <ChevBtn w={50} label="Copy options" />
              </Row>
              <TextBtn $pad={7}><IconBox $w={18}><svg width="18" height="16"><path d="M0 7l6-3 6 5-5 7z" fill="#e3a76a" /><path d="M5 4l3-2 6 5-2 3zM12 4l4-4 2 2-4 4z" fill="#c9c9c9" /></svg></IconBox>Format Painter</TextBtn>
            </ThreeRows>
          </GroupBody>
          <GroupLabel $pr={16}><span>Clipboard</span><LaunchIcon label="Clipboard settings" /></GroupLabel>
        </Group>

        <Group $w={288}>
          <TwoRows>
            <Row $pad={10}>
              <FontPicks>
                <Pick $w={143}><select aria-label="Font"><option>Calibri</option></select><Caret /></Pick>
                <Pick $w={63}><select aria-label="Font size"><option>11</option></select><Caret /></Pick>
              </FontPicks>
              <Btn $w={36} aria-label="Increase font size"><svg width="16" height="20" fill="none" stroke="#c5c5c5" strokeWidth="1.600"><path d="M1 18L6 5l5 13M3 13.500h6" /><path d="M9 4l3-3 3 3z" fill="#3b82c9" stroke="none" /></svg></Btn>
              <Btn $w={22} aria-label="Decrease font size"><svg width="16" height="20" fill="none" stroke="#c5c5c5" strokeWidth="1.600"><path d="M1 18L6 6l5 12M3 14h6" /><path d="M9 1l3 3 3-3z" fill="#3b82c9" stroke="none" /></svg></Btn>
            </Row>
            <Row $pad={8}>
              <Btn $w={30}><Glyph $bold>B</Glyph></Btn>
              <Btn $w={31}><Glyph $serif $italic $bold $size={18}>I</Glyph></Btn>
              <Btn $w={27}><Glyph $u>U</Glyph></Btn>
              <ChevBtn w={20} label="Underline options" />
              <Sep $w={10} />
              <Btn $w={27} aria-label="Borders"><svg width="17" height="17"><rect width="17" height="17" fill="#ececec" /><path d="M8.500 0v17M0 8.500h17" stroke="#555" strokeDasharray="1 1" /></svg></Btn>
              <ChevBtn w={18} label="Border options" />
              <Sep $w={12} />
              <Btn $w={26} aria-label="Fill colour"><svg width="20" height="20"><path d="M3 8l6-6 6 6-6 5z" fill="#f0f0f0" /><path d="M8 4V0h3v4" fill="none" stroke="#777" /><path d="M15 5q5 2 3 8-3-1-3-8" fill="#3b82c9" /><path d="M0 15h20v5H0z" fill="#ff0" /></svg></Btn>
              <ChevBtn w={18} label="Fill options" />
              <Btn $w={34} aria-label="Font colour"><svg width="20" height="20" fill="none" stroke="#ddd" strokeWidth="2"><path d="M5 12l5-11 5 11M7 8.500h6" /><path d="M0 15h20v5H0z" fill="#c00000" stroke="none" /></svg></Btn>
              <ChevBtn w={14} label="Font colour options" />
            </Row>
          </TwoRows>
          <GroupLabel $pr={2}><span>Font</span><LaunchIcon label="Font settings" /></GroupLabel>
        </Group>

        <Group $w={404}>
          <GroupBody>
            <TwoRows>
              <Row $pad={9}>
                <Btn $w={30} aria-label="Top align"><Lines rows={[[0, 18], [2, 14], [0, 18]]} /></Btn>
                <Btn $w={30} aria-label="Middle align"><Lines top={3} rows={[[0, 18], [2, 14], [0, 18]]} /></Btn>
                <Btn $w={29} $on aria-label="Bottom align"><Lines top={7} rows={[[0, 18], [2, 14], [0, 18]]} /></Btn>
                <Sep $w={8} />
                <Btn $w={28} aria-label="Orientation"><svg width="20" height="20" fill="none" stroke="#c5c5c5" strokeWidth="1.300"><circle cx="4" cy="9" r="2.500" /><path d="M4 5l4 6M6 1l6 8" /><circle cx="10" cy="5" r="2.500" /><path d="M5 17L18 7M13 7h5v5" /></svg></Btn>
                <ChevBtn w={14} label="Orientation options" />
                <Sep $w={18} />
                <Btn $w={18} aria-label="Text direction"><svg width="16" height="14"><path d="M0 2l5 4-5 4z" fill="#3b82c9" /><path d="M11 1H9a3 3 0 0 0 0 6h2zM11 1v12M14 1v12M10 1h6" fill="#c5c5c5" stroke="#c5c5c5" /></svg></Btn>
                <ChevBtn w={28} label="Direction options" />
              </Row>
              <Row $pad={9}>
                <Btn $w={30} aria-label="Align left"><Lines top={2} w={14} rows={[[0, 14], [0, 9], [0, 14], [0, 9]]} /></Btn>
                <Btn $w={30} aria-label="Centre"><Lines top={2} w={16} rows={[[0, 16], [3, 10], [0, 16], [3, 10]]} /></Btn>
                <Btn $w={30} aria-label="Align right"><Lines top={2} w={14} rows={[[0, 14], [5, 9], [0, 14], [5, 9]]} /></Btn>
                <Sep $w={7} />
                <Btn $w={30} aria-label="Decrease indent"><Indent dir={-1} /></Btn>
                <Btn $w={28} aria-label="Increase indent"><Indent dir={1} /></Btn>
              </Row>
            </TwoRows>
            <Sep $w={4} $tall />
            <TwoRows>
              <TextBtn $pad={8} $gap={4}>
                <IconBox $w={20}><svg width="18" height="24" fill="#ddd" fontFamily="Open Sans, sans-serif" fontSize="11"><text x="1" y="10">ab</text><text x="1" y="21">c</text><path d="M16 13v4H9M12 14l-3 3 3 3" fill="none" stroke="#3b82c9" strokeWidth="1.500" /></svg></IconBox>
                Wrap Text
              </TextBtn>
              <Row>
                <TextBtn $pad={8} $gap={4}>
                  <IconBox $w={20}><svg width="19" height="19"><rect width="19" height="19" fill="#ececec" /><path d="M0 5h19M0 14h19M9.500 0v5M9.500 14v5" stroke="#444" /><path d="M2 9.500h15M5 7L2 9.500 5 12M14 7l3 2.500-3 2.500" fill="none" stroke="#3b82c9" strokeWidth="1.500" /></svg></IconBox>
                  Merge &amp; Center
                </TextBtn>
                <ChevBtn w={54} label="Merge options" />
              </Row>
            </TwoRows>
          </GroupBody>
          <GroupLabel $pr={2}><span>Alignment</span><LaunchIcon label="Alignment settings" /></GroupLabel>
        </Group>

        <Group $w={194}>
          <TwoRows>
            <Row $pad={10}><Pick $w={174}><select aria-label="Number format"><option>General</option></select><Caret /></Pick></Row>
            <Row $pad={10}>
              <Btn $w={26}><Glyph $size={18}>$</Glyph></Btn>
              <ChevBtn w={20} label="Currency options" />
              <Btn $w={32}><Glyph $size={18}>%</Glyph></Btn>
              <Btn $w={28} aria-label="Comma style"><svg width="8" height="12"><circle cx="4" cy="4" r="3" fill="#ccc" /><path d="M6.500 3q1 5-5 8" fill="none" stroke="#ccc" strokeWidth="1.500" /></svg></Btn>
              <Sep $w={10} />
              <Btn $w={28} aria-label="Increase decimal"><svg width="16" height="20" fill="#ddd" fontFamily="Open Sans, sans-serif" fontSize="9"><text x="8" y="8">.0</text><text x="1" y="18">.00</text><path d="M7 5H1M3.500 2.500L1 5l2.500 2.500" fill="none" stroke="#3b82c9" strokeWidth="1.600" /></svg></Btn>
              <Btn $w={32} aria-label="Decrease decimal"><svg width="16" height="20" fill="#ddd" fontFamily="Open Sans, sans-serif" fontSize="9"><text x="2" y="8">.00</text><text x="8" y="18">.0</text><path d="M0 15h6M3.500 12.500L6 15l-2.500 2.500" fill="none" stroke="#3b82c9" strokeWidth="1.600" /></svg></Btn>
            </Row>
          </TwoRows>
          <GroupLabel $pr={2}><span>Number</span><LaunchIcon label="Number settings" /></GroupLabel>
        </Group>

        <Group $w={242}>
          <GroupBody $pad={8}>
            <Big $w={96}>
              <svg width="38" height="40"><Sheetlet x={1} y={6} w={33} h={28} nx={3} ny={4} /><path d="M12 7h6v6h-6zM12 21h8v6h-8z" fill="#e0522b" /><path d="M12 14h10v6H12zM12 28h5v6h-5z" fill="#3b82c9" /><rect x="19" y="25" width="18" height="14" fill="#f5f5f5" stroke="#777" /><path d="M24 30h8M24 34h8M31 27l-5 10" stroke="#222" /></svg>
              <Line>Conditional</Line><Line>Formatting <Chev /></Line>
            </Big>
            <Big $w={68}>
              <svg width="38" height="40"><Sheetlet x={1} y={5} w={32} h={28} nx={4} ny={4} /><path d="M9 12h24v21H9z" fill="#a9c0e4" opacity=".8" /><g transform="translate(0 3)"><Brush /></g></svg>
              <Line>Format as</Line><Line>Table <Chev /></Line>
            </Big>
            <Big $w={60}>
              <svg width="38" height="40"><Sheetlet x={1} y={2} w={33} h={28} nx={4} ny={4} /><path d="M9 9h17v14H9z" fill="#a9c0e4" /><g transform="translate(1 3)"><Brush /></g></svg>
              <Line>Cell</Line><Line>Styles <Chev /></Line>
            </Big>
          </GroupBody>
          <GroupLabel $pr={4}><span>Styles</span></GroupLabel>
        </Group>

        <Group $w={177}>
          <GroupBody $pad={9}>
            <Big $w={54}>
              <svg width="38" height="40"><Sheetlet x={4} y={3} w={18} h={6} nx={2} ny={1} /><Sheetlet x={4} y={25} w={18} h={12} nx={2} ny={2} /><rect x="19" y="14" width="18" height="7" fill="#a9c0e4" stroke="#999" /><path d="M28 14v7" stroke="#999" /><path d="M16 17.500H3M8 12l-6 5.500L8 23" fill="none" stroke="#3b82c9" strokeWidth="2.500" /></svg>
              <Line>Insert</Line><Line><Chev /></Line>
            </Big>
            <Big $w={51}>
              <svg width="38" height="40"><Sheetlet x={2} y={3} w={18} h={6} nx={2} ny={1} /><Sheetlet x={2} y={23} w={18} h={12} nx={2} ny={2} /><path d="M9 13h11l4 3-4 4H9z" fill="#a9c0e4" stroke="#999" /><path d="M21 9q7 8 16 15M36 10q-9 6-15 15" fill="none" stroke="#e0522b" strokeWidth="2" /></svg>
              <Line>Delete</Line><Line><Chev /></Line>
            </Big>
            <Big $w={54}>
              <svg width="38" height="40"><Sheetlet x={2} y={10} w={33} h={25} nx={4} ny={4} /><path d="M3 35h10l-3 3H3zM14 38l4-3h7l-3 3z" fill="#f0f0f0" /><path d="M11 17h9v11h-9z" fill="#3b82c9" /><path d="M2.500 1v7M29.500 1v7M5 4.500h22M8 2L5 4.500 8 7M24 2l3 2.500L24 7" fill="none" stroke="#3b82c9" strokeWidth="1.500" /></svg>
              <Line>Format</Line><Line><Chev /></Line>
            </Big>
          </GroupBody>
          <GroupLabel $pr={4}><span>Cells</span></GroupLabel>
        </Group>

        <Group $w={262}>
          <GroupBody $pad={15}>
            <ThreeRows>
              <Row $gap={2}>
                <TextBtn><IconBox $w={17}><svg width="16" height="17" fill="none" stroke="#ddd" strokeWidth="2"><path d="M15 4V1H2l7 7-8 8h14v-3" /></svg></IconBox>AutoSum</TextBtn>
                <ChevBtn w={46} label="AutoSum options" />
              </Row>
              <TextBtn><IconBox $w={17}><svg width="17" height="18"><rect x=".5" y=".5" width="16" height="17" fill="#eee" stroke="#777" /><path d="M8.500 5v9M5 10.500L8.500 14l3.500-3.500" fill="none" stroke="#3b82c9" strokeWidth="2" /></svg></IconBox>Fill <Chev /></TextBtn>
              <TextBtn><IconBox $w={17}><svg width="16" height="17"><path d="M10 1l5 4-6 8-5-4z" fill="#d9606e" /><path d="M3 10l5 4-3 3-5-3z" fill="#c8474f" stroke="#eee" strokeWidth=".5" /></svg></IconBox>Clear <Chev /></TextBtn>
            </ThreeRows>
            <Big $w={40}>
              <svg width="36" height="40" fill="none"><path d="M2 17L7.500 4 13 17M4 12.500h7" stroke="#3b82c9" strokeWidth="2" /><path d="M3 22h9L3 34h9" stroke="#b55aa8" strokeWidth="2" /><path d="M17 11h18l-7 8v9h-4v-9z" fill="#ccc" /></svg>
              <Line>Sort &amp;</Line><Line>Filter <Chev /></Line>
            </Big>
            <Big $w={72}>
              <svg width="36" height="40" fill="none"><path d="M3 36l12-14" stroke="#3b82c9" strokeWidth="5" /><circle cx="22" cy="14" r="12" fill="#f2f2f2" stroke="#3b82c9" strokeWidth="2.500" /></svg>
              <Line>Find &amp;</Line><Line>Select <Chev /></Line>
            </Big>
          </GroupBody>
          <GroupLabel $pr={4}><span>Editing</span></GroupLabel>
        </Group>

        <Group $w={78}>
          <GroupBody>
            <Big $w={78}>
              <svg width="36" height="40"><circle cx="17" cy="19" r="6.500" fill="#e06a2b" /></svg>
              <Line>Add-ins</Line>
            </Big>
          </GroupBody>
          <GroupLabel $pr={2}><span>Add-ins</span></GroupLabel>
        </Group>
      </Ribbon>

      <FormulaBar>
        <NameBox><input aria-label="Name box" defaultValue="D38" /><svg width="8" height="5"><path d="M0 0h8L4 5z" fill="#f0f0f0" /></svg></NameBox>
        <Dots $w={37}><svg width="3" height="14" fill="#eee"><path d="M0 0h3v3H0zM0 5h3v3H0zM0 10h3v3H0z" /></svg></Dots>
        <FxBox>
          <Btn $w={30} aria-label="Cancel"><svg width="16" height="14" fill="none" stroke="#808080" strokeWidth="1.800"><path d="M1 1l14 12M15 1L1 13" /></svg></Btn>
          <Btn $w={30} aria-label="Enter"><svg width="17" height="14" fill="none" stroke="#707070" strokeWidth="2.500"><path d="M1 8l5 4L16 1" /></svg></Btn>
          <Btn $w={30}><Glyph $serif $italic $bold $size={20}>fx</Glyph></Btn>
        </FxBox>
        <FormulaInput aria-label="Formula" />
      </FormulaBar>

      <Sheet>
        <Grid style={{ width: tableWidth }}>
          <colgroup>
            <col style={{ width: 3 }} />
            {colWidths.map((w, i) => <col key={i} style={{ width: w }} />)}
          </colgroup>
          <thead>
            <tr>
              <ColHead />
              {colNames.map((n) => <ColHead key={n} $on={n === 'D'}>{n}</ColHead>)}
            </tr>
          </thead>
          <tbody>
            {Array.from({ length: 90 }, (_, i) => i + 1).map((r) => (
              <tr key={r} style={{ height: rowHeight(r) }}>
                <RowHead $on={r === 38} />
                {renderRow(r)}
              </tr>
            ))}
          </tbody>
        </Grid>
        <Selection />
        <Chart x={459} y={251} w={267} h={216} title="Pump curve & System curve" tx={132} plot={[31, 20, 154, 164]} min={0} max={250} step={50} yl="H pump(m)" xl="Q(l/s)" fs={6}
          series={[{ d: qs.map((q, i) => [q, +hp[i]]), c: '#3b78c4' }, { d: qs.map((q, i) => [q, +hreq[i]]), c: '#e07b2f' }]}
          legend={[['Pump curve', '#3b78c4'], ['System curve', '#e0602f']]} />
        <Chart x={725} y={250} w={254} h={216} title="EFF. curve" tx={126} plot={[38, 23, 201, 161]} min={0} max={100} step={10} yl="Eff.(%)" xl="Q(l/s)" fs={7}
          series={[{ d: qs.slice(9).map((q, i) => [q, +eff[i + 9]]), c: '#3b78c4' }]} />
        <Chart x={979} y={288} w={211} h={131} title="Operating point" tx={104} plot={[30, 21, 167, 92]} min={-80} max={100} step={20} yl="dH(m)" xl="Q(L/s)" fs={5} axisY={0}
          series={[{ d: qs.map((q, i) => [q, +dh[i]]), c: '#3b78c4' }]} />
      </Sheet>

      <Bottom>
        <NavArrows>
          <Btn $w={31} aria-label="Previous sheet"><svg width="6" height="10"><path d="M6 0v10L0 5z" fill="#999" /></svg></Btn>
          <Btn $w={31} aria-label="Next sheet"><svg width="6" height="10"><path d="M0 0v10l6-5z" fill="#fff" /></svg></Btn>
        </NavArrows>
        <TabSep /><SheetTab $w={104} $bg="#c80000">D900(690)</SheetTab>
        <TabSep /><SheetTab $w={104} $bg="#445436">D900(647)</SheetTab>
        <TabSep /><SheetTab $w={62} $bg="#c80000">D800</SheetTab>
        <SheetTab $w={66} $on>D750</SheetTab>
        <SheetTab $w={94}>Summary</SheetTab>
        <TabSep /><SheetTab $w={213}>Pump curve(D900(647))</SheetTab>
        <TabSep /><SheetTab $w={214}>Pump curve(D900(690))</SheetTab>
        <TabSep /><SheetTab $w={69} $clip>Pump curve</SheetTab>
        <Btn $w={30} aria-label="More sheets">...</Btn>
        <Btn $w={34} aria-label="New sheet"><svg width="22" height="22" fill="none" stroke="#eee" strokeWidth="1.300"><circle cx="11" cy="11" r="9.500" /><path d="M11 6v10M6 11h10" strokeWidth="2" /></svg></Btn>
        <Dots $w={32}><svg width="3" height="14" fill="#eee"><path d="M0 0h3v3H0zM0 5h3v3H0zM0 10h3v3H0z" /></svg></Dots>
        <ScrollBar>
          <ScrollBtn $w={20} aria-label="Scroll left"><svg width="6" height="10"><path d="M6 0v10L0 5z" fill="#fff" /></svg></ScrollBtn>
          <Thumb />
          <ScrollBtn $w={10} aria-label="Scroll right"><svg width="4" height="10"><path d="M0 0v10l4-4z" fill="#fff" /></svg></ScrollBtn>
        </ScrollBar>
      </Bottom>
      <Status>
        <svg width="200" height="9" fill="#ddd"><path d="M137 8q0-3 4-3h11v4h-15zM178 8l6-3v4h-6z" /></svg>
        <svg width="340" height="9" viewBox="1533 0 340 9" fill="none" stroke="#eee"><path d="M1534 0h50v9h-50z" fill="#484a48" stroke="none" /><path d="M1551.500 9V5.500h15V9M1556.500 6v3M1561.500 6v3M1600.500 9V5.500h16V9M1604 8.500h9M1650.500 9V5.500h16V9M1655.500 6v3M1661.500 6v3" /><path d="M1724 7h6v2h-6z" fill="#fff" stroke="none" /></svg>
      </Status>
      <Watermark width="232" height="104" viewBox="824 851 232 104" fill="none" stroke="#bdbfc4" strokeWidth="10">
        <path d="M849 885a16 16 0 1 0 13 17V861" strokeLinecap="round" />
        <path d="M861 910h160" strokeWidth="11" />
        <circle cx="899" cy="890" r="15" /><circle cx="1027" cy="901" r="16" />
        <path d="M939 894l-2 14M960 894l-2 14M976 890l-3 18M993 887l-4 21" strokeLinecap="round" />
        <g fill="#bdbfc4" stroke="none">
          <circle cx="891" cy="863" r="7" /><circle cx="907" cy="863" r="7" /><circle cx="931" cy="876" r="7" /><circle cx="947" cy="876" r="7" />
          <text x="824" y="951" fontFamily="Liberation Sans, Arial, sans-serif" fontWeight="700" fontSize="37">mostaql.com</text>
        </g>
      </Watermark>
    </Window>
  );
}
